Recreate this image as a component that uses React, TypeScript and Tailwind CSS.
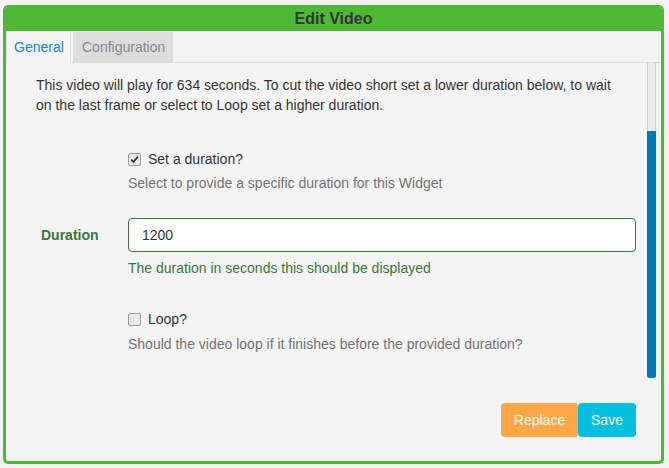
import React from "react";

const font = { fontFamily: '"Liberation Sans", Arial, sans-serif' };

const Checkbox = ({ checked }: { checked?: boolean }) => (
  <span className="flex h-[13px] w-[13px] items-center justify-center rounded-[2px] border border-[#9a9a9a] bg-[#e9e9e9]">
    {checked && (
      <svg width="9" height="9" viewBox="0 0 9 9">
        <path d="M1.2 4.6 L3.5 7 L7.9 1.6" fill="none" stroke="#333" strokeWidth="1.8" />
      </svg>
    )}
  </span>
);

const App = () => {
  return (
    <div className="h-[468px] w-[669px] bg-[#f3f3f3] pl-[3px] pt-[5px] text-[14px] leading-[20px] text-[#333]" style={font}>
      <div className="flex h-[459px] w-[661px] flex-col overflow-hidden rounded-[5px] border-[3px] border-t-0 border-[#4fb936] bg-[#f4f4f4]">
        <div className="flex h-[26px] items-center justify-center bg-[#4fb936] pt-[1px] text-[16px] font-bold text-[#333]">
          Edit Video
        </div>

        <div className="flex h-[32px] border-b border-[#dcdcdc]">
          <div className="flex h-[32px] w-[65px] items-center border-x border-[#e2e2e2] bg-[#f4f4f4] pl-[7px] text-[#1d87c8]">
            General
          </div>
          <div className="ml-[2px] mt-[1px] flex h-[30px] w-[100px] items-center bg-[#dddddd] pl-[9px] text-[#888]">
            Configuration
          </div>
        </div>

        <div className="flex h-[315px]">
          <div className="flex-1">
            <p className="ml-[30px] mt-[12px] w-[585px]">
              This video will play for 634 seconds. To cut the video short set a lower duration below, to wait on the last frame or select to Loop set a higher duration.
            </p>

            <div className="ml-[122px] mt-[34px]">
              <div className="flex items-center gap-[7px]">
                <Checkbox checked />
                <span>Set a duration?</span>
              </div>
              <div className="mt-[4px] text-[#737373]">Select to provide a specific duration for this Widget</div>
            </div>

            <div className="ml-[30px] mr-[11px] mt-[25px] flex items-center">
              <label className="w-[92px] pl-[5px] font-bold text-[#3c763d]">Duration</label>
              <div className="flex h-[34px] flex-1 items-center rounded-[4px] border border-[#3c763d] bg-white pl-[13px]">
                1200
              </div>
            </div>
            <div className="ml-[122px] mt-[6px] text-[#3c763d]">The duration in seconds this should be displayed</div>

            <div className="ml-[122px] mt-[31px]">
              <div className="flex items-center gap-[7px]">
                <Checkbox />
                <span>Loop?</span>
              </div>
              <div className="mt-[5px] text-[#737373]">Should the video loop if it finishes before the provided duration?</div>
            </div>
          </div>

          <div className="mr-[5px] flex w-[9px] flex-col">
            <div className="h-[68px] border-x border-[#cfcfcf] bg-[#ececec]" />
            <div className="flex-1 rounded-b-[2px] bg-[#0079b5]" />
          </div>
        </div>

        <div className="mr-[25px] mt-[25px] flex justify-end">
          <button className="h-[34px] w-[77px] rounded-[4px] bg-[#ffa646] text-white">Replace</button>
          <button className="h-[34px] w-[58px] rounded-[4px] bg-[#00bfdf] text-white">Save</button>
        </div>
      </div>
    </div>
  );
};

export default App;
